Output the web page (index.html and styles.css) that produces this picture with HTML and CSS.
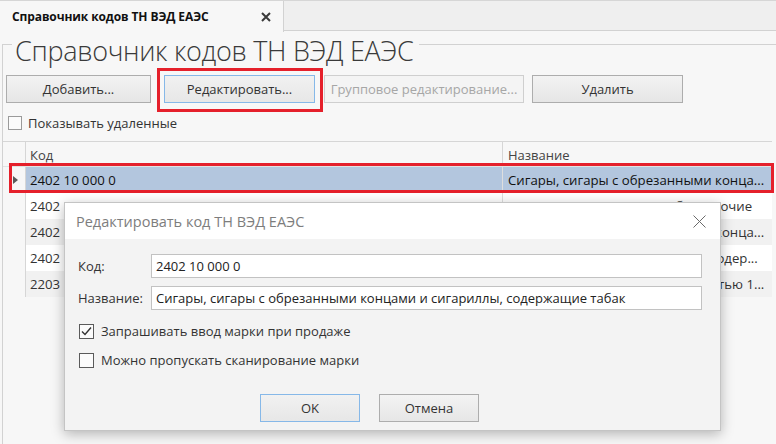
FILE: index.html
```html
<!DOCTYPE html>
<html lang="ru">
<head>
<meta charset="utf-8">
<title>Справочник кодов ТН ВЭД ЕАЭС</title>
<link rel="stylesheet" href="styles.css">
</head>
<body>
<div class="app">
  <div class="tabbar">
    <div class="tab">
      <span class="tab-title">Справочник кодов ТН ВЭД ЕАЭС</span>
      <svg class="tab-close" width="10" height="10" viewBox="0 0 10 10"><path d="M1 1L9 9M9 1L1 9" stroke="#3a3a3a" stroke-width="2"/></svg>
    </div>
  </div>
  <div class="page">
    <div class="group">
      <div class="group-head">
        <span class="corner"></span>
        <h1 class="title">Справочник кодов ТН ВЭД ЕАЭС</h1>
        <span class="rule"></span>
      </div>
      <div class="toolbar">
        <button class="btn btn-add">Добавить...</button>
        <button class="btn btn-edit focused">Редактировать...</button>
        <button class="btn btn-group" disabled>Групповое редактирование...</button>
        <button class="btn btn-del">Удалить</button>
      </div>
      <label class="show-deleted"><span class="box small"></span>Показывать удаленные</label>
      <div class="grid">
        <div class="row head">
          <div class="ind"></div>
          <div class="c-code">Код</div>
          <div class="c-name">Название</div>
        </div>
        <div class="row sel">
          <div class="ind"><svg width="5" height="8" viewBox="0 0 5 8"><path d="M0 0L5 4L0 8Z" fill="#5a5a5a"/></svg></div>
          <div class="c-code">2402 10 000 0</div>
          <div class="c-name">Сигары, сигары с обрезанными конца...</div>
        </div>
        <div class="row">
          <div class="ind"></div>
          <div class="c-code">2402</div>
          <div class="c-name">Сигареты, содержащие табак: прочие</div>
        </div>
        <div class="row alt">
          <div class="ind"></div>
          <div class="c-code">2402</div>
          <div class="c-name">Сигары, сигары с обрезанными конца...</div>
        </div>
        <div class="row">
          <div class="ind"></div>
          <div class="c-code">2402</div>
          <div class="c-name">Сигареты из табака или же его содер...</div>
        </div>
        <div class="row alt">
          <div class="ind"></div>
          <div class="c-code">2203</div>
          <div class="c-name">Пиво солодовое в сосудах емкостью 1...</div>
        </div>
        <div class="grid-rest">
          <div class="ind"></div>
        </div>
      </div>
    </div>
  </div>

  <div class="mark mark-btn"></div>
  <div class="mark mark-row"></div>

  <div class="dialog">
    <div class="dlg-title">
      <span>Редактировать код ТН ВЭД ЕАЭС</span>
      <svg class="dlg-close" width="13" height="13" viewBox="0 0 13 13"><path d="M0.5 0.5L12.5 12.5M12.5 0.5L0.5 12.5" stroke="#6a6a6a" stroke-width="1"/></svg>
    </div>
    <div class="dlg-body">
      <div class="form">
        <label class="lbl">Код:</label>
        <div class="input">2402 10 000 0</div>
        <label class="lbl">Название:</label>
        <div class="input">Сигары, сигары с обрезанными концами и сигариллы, содержащие табак</div>
      </div>
      <label class="opt"><span class="box"><svg width="13" height="13" viewBox="0 0 13 13"><path d="M2 6.5L5 9.5L11 2.5" fill="none" stroke="#333" stroke-width="1.4"/></svg></span>Запрашивать ввод марки при продаже</label>
      <label class="opt opt2"><span class="box"></span>Можно пропускать сканирование марки</label>
      <div class="dlg-buttons">
        <button class="btn dbtn focused">OK</button>
        <button class="btn dbtn">Отмена</button>
      </div>
    </div>
  </div>
</div>
</body>
</html>
```
FILE: styles.css
```css
* { box-sizing: border-box; }
html, body { margin: 0; padding: 0; }
body {
  width: 776px;
  height: 444px;
  overflow: hidden;
  background: #f7f7f7;
  font-family: "Open Sans", "Noto Sans", sans-serif;
  font-size: 13px;
  color: #333;
}
.app { position: relative; width: 776px; height: 444px; overflow: hidden; }

/* tab strip */
.tabbar {
  height: 31px;
  background: #efefef;
  border-top: 1px solid #d6d6d6;
  border-bottom: 1px solid #d2d2d2;
  display: flex;
}
.tab {
  width: 284px;
  height: 31px;
  margin-bottom: -1px;
  background: #f7f7f7;
  border-right: 1px solid #d2d2d2;
  display: flex;
  align-items: center;
  padding-left: 12px;
}
.tab-title { font-weight: 700; font-size: 12px; color: #111; letter-spacing: -0.1px; }
.tab-close { margin-left: auto; margin-right: 12px; }

/* group box */
.page { padding-left: 2px; }
.group {
  margin-top: 13px;
  border-left: 1px solid #d2d2d2;
  height: 420px;
}
.group-head { display: flex; align-items: flex-start; height: 21px; }
.corner { width: 9px; border-top: 1px solid #d2d2d2; }
.title {
  margin: -7px 0 0 0;
  padding: 0 6px 0 3px;
  font-size: 27px;
  line-height: 28px;
  font-weight: 300;
  color: #3a3a3a;
  letter-spacing: -0.3px;
  white-space: nowrap;
}
.rule { flex: 1; border-top: 1px solid #d2d2d2; }

.toolbar { display: flex; margin-top: 10px; padding-left: 3px; }
.btn {
  font-family: inherit;
  font-size: 13px;
  color: #333;
  height: 28px;
  border: 1px solid #adadad;
  background: linear-gradient(#f3f3f3, #e6e6e6);
  padding: 0;
  margin: 0;
}
.btn.focused { border-color: #86b8e8; background: linear-gradient(#f1f1f1, #e7e7e7); }
.btn:disabled { color: #a6a6a6; border-color: #cfcfcf; background: #f4f4f4; }
.btn-add { width: 145px; }
.btn-edit { width: 151px; margin-left: 13px; }
.btn-group { width: 200px; margin-left: 9px; }
.btn-del { width: 151px; margin-left: 8px; }

.show-deleted {
  display: flex;
  align-items: center;
  height: 16px;
  margin-top: 12px;
  padding-left: 5px;
  color: #333;
}
.box {
  display: inline-flex;
  align-items: center;
  justify-content: center;
  width: 15px;
  height: 15px;
  border: 1px solid #5a5a5a;
  background: #fbfbfb;
  margin-right: 7px;
}
.box.small { width: 14px; height: 14px; border-color: #9a9a9a; margin-right: 6px; }

/* data grid */
.grid { margin-top: 10px; margin-right: 4px; border-top: 1px solid #d6d6d6; font-size: 13.2px; line-height: 13px; }
.row { display: flex; height: 26px; background: #ffffff; }
.row.alt { background: #f1f1f1; }
.row.head { height: 25px; background: #f7f7f7; border-bottom: 1px solid #e2e2e2; }
.row > div { display: flex; align-items: center; white-space: nowrap; overflow: hidden; }
.ind {
  width: 23px;
  flex: none;
  background: #f7f7f7;
  border-right: 1px solid #d6d6d6;
  justify-content: center;
  padding-left: 2px;
}
.row > .ind { display: flex; align-items: center; }
.c-code { width: 477px; padding-left: 4px; border-right: 1px solid #dedede; }
.c-name { flex: 1; padding-left: 5px; }
.row.sel .c-code, .row.sel .c-name { background: #b3c6de; color: #111; }
.row.head .c-code, .row.head .c-name { color: #444; padding-top: 2px; font-size: 13px; }
.row.head .c-code { border-right-color: #d6d6d6; }
.grid-rest { height: 150px; }
.grid-rest .ind { height: 100%; background: transparent; border-right: none; }

/* annotation marks */
.mark { position: absolute; border: 3px solid #e5202b; }
.mark-btn { left: 157px; top: 68px; width: 166px; height: 44px; }
.mark-row { left: 9px; top: 163px; width: 765px; height: 30px; }

/* dialog */
.dialog {
  position: absolute;
  left: 64px;
  top: 202px;
  width: 657px;
  height: 229px;
  border: 1px solid #c4c4c4;
  background: #f3f3f3;
  box-shadow: 0 3px 12px rgba(0, 0, 0, 0.28);
}
.dlg-title {
  height: 36px;
  background: #ffffff;
  display: flex;
  align-items: center;
  padding-left: 11px;
  font-size: 14.5px;
  color: #7d7d7d;
}
.dlg-close { margin-left: auto; margin-right: 14px; }
.dlg-body { padding: 15px 18px 0 13px; }
.form {
  display: grid;
  grid-template-columns: 73px 1fr;
  row-gap: 8px;
  align-items: center;
}
.lbl { color: #333; }
.input {
  height: 24px;
  border: 1px solid #c2c2c2;
  background: #ffffff;
  display: flex;
  align-items: center;
  padding-left: 4px;
  color: #222;
  white-space: nowrap;
  line-height: 13px;
}
.opt { display: flex; align-items: center; height: 16px; margin-top: 13px; padding-left: 1px; color: #333; }
.opt2 { margin-top: 13px; }
.dlg-buttons { display: flex; margin-top: 26px; padding-left: 182px; gap: 19px; }
.dbtn { width: 100px; }
```
